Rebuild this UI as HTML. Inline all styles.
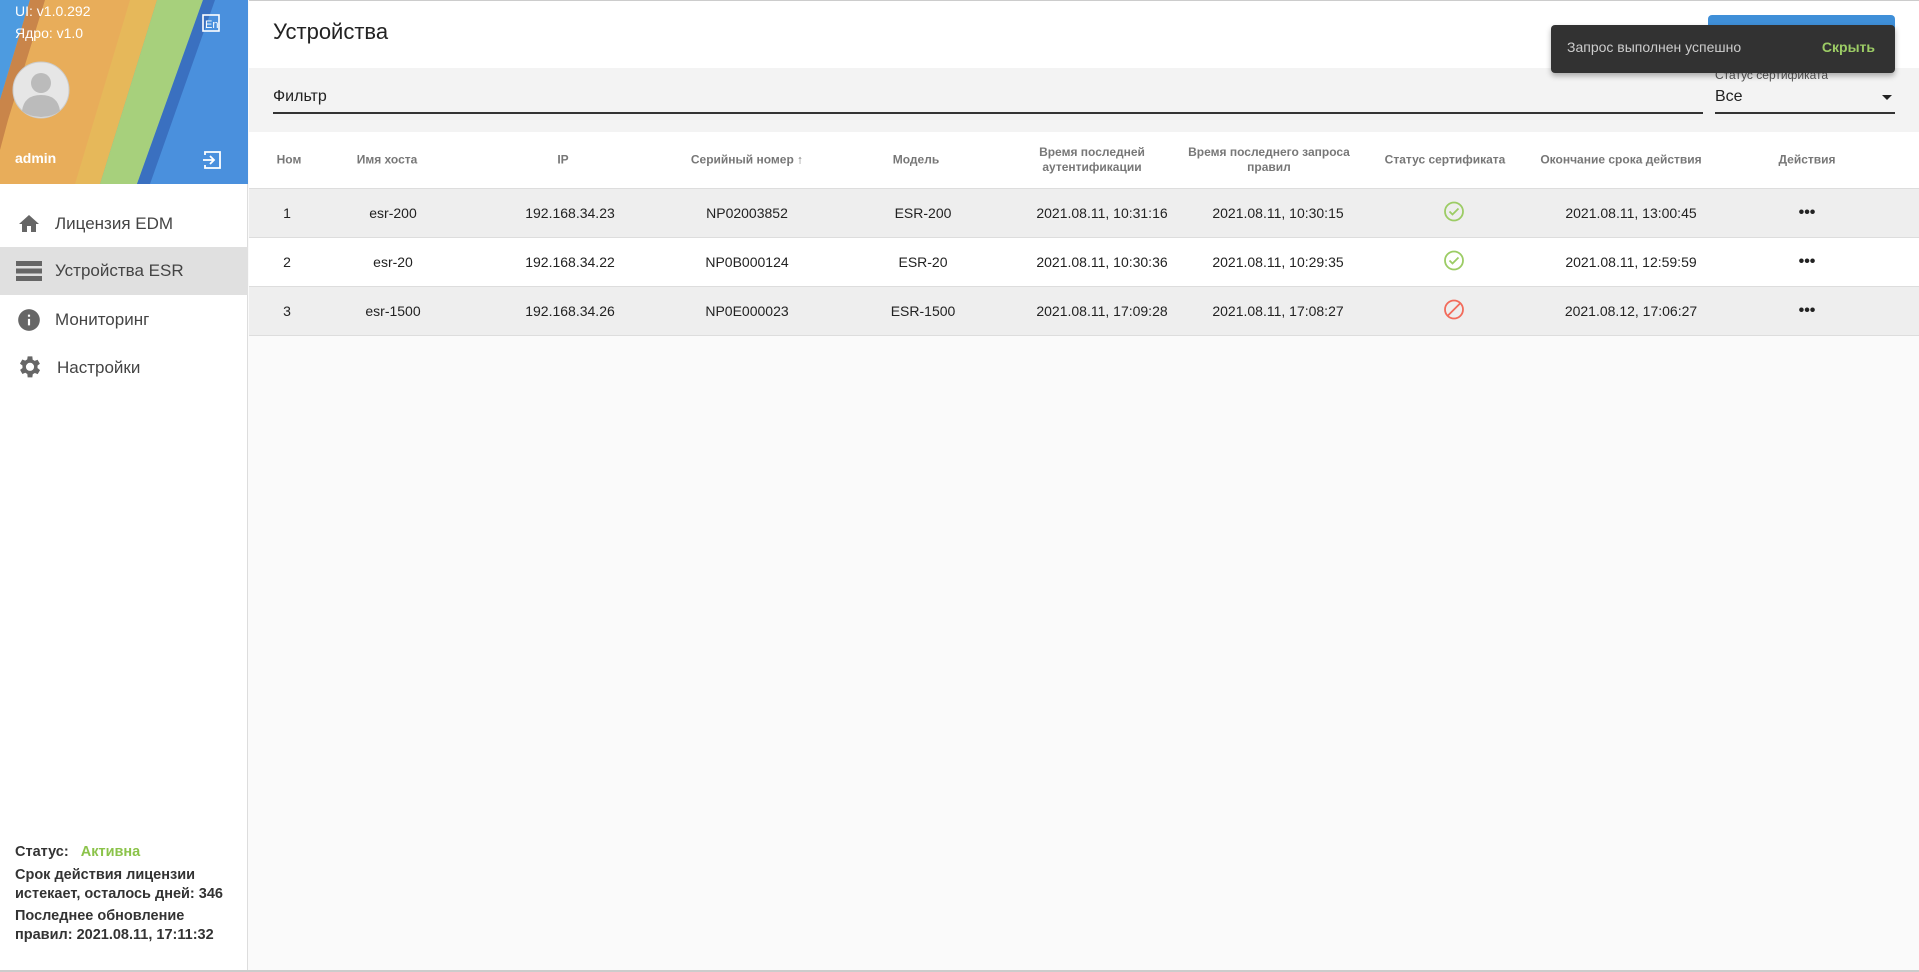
<!DOCTYPE html>
<html><head><meta charset="utf-8"><style>
*{box-sizing:border-box;margin:0;padding:0}
body{width:1919px;height:972px;overflow:hidden;background:#fafafa;font-family:"Liberation Sans","DejaVu Sans",sans-serif;position:relative;color:#222}
.sb{position:absolute;left:0;top:0;width:248px;height:972px;background:#fff;border-right:1px solid #ddd}
.hdr{position:absolute;left:0;top:0;width:248px;height:184px;overflow:hidden}
.ver{position:absolute;left:15px;color:#fff;font-size:14px}
.menu{position:absolute;left:0;width:248px;height:48px;display:flex;align-items:center;font-size:17px;color:#444}
.menu svg{margin-left:16px;margin-right:13px}
.foot{position:absolute;left:15px;font-size:14.5px;font-weight:bold;color:#333;line-height:19px}
.main{position:absolute;left:249px;top:0;right:0;height:972px;border-top:1px solid #ccc}
.title{position:absolute;left:24px;top:18px;font-size:22px;color:#222}
.filt{position:absolute;left:0;right:0;top:67px;height:64px;background:#f3f3f3}
.tbl{position:absolute;left:0;right:0;top:131px}
.row{position:relative;height:49px;border-bottom:1px solid #ddd;font-size:14px}
.row span{position:absolute;top:50%;transform:translate(-50%,-50%);white-space:nowrap;text-align:center}
.th span{font-size:12px;font-weight:bold;color:#777;line-height:15px}
.th{height:57px;background:#fff}
.g{background:#eee}.w{background:#fff}
</style></head><body>
<div class="sb">
 <div class="hdr">
  <svg width="248" height="184" style="position:absolute;left:0;top:0">
   <rect width="248" height="184" fill="#4a90dd"/>
   <polygon points="0,0 30,0 0,100" fill="#4d9be0"/>
   <polygon points="30,0 157,0 100,184 0,184 0,100" fill="#e8ad5a"/>
   <polygon points="30,0 45,0 8,120 0,150 0,100" fill="#c9854a"/>
   <polygon points="130,0 157,0 100,184 75,184" fill="#e6b85a"/>
   <polygon points="157,0 203,0 137,184 100,184" fill="#a7d07c"/>
   <polygon points="203,0 215,0 150,184 137,184" fill="#3a70c0"/>
  </svg>
  <div class="ver" style="top:3px">UI: v1.0.292</div>
  <div class="ver" style="top:25px">Ядро: v1.0</div>
  <svg width="20" height="20" style="position:absolute;left:202px;top:14px"><rect x="1" y="1" width="16" height="16" fill="none" stroke="#fff" stroke-width="1.6"/><text x="3" y="14" fill="#fff" font-size="11" font-family="Liberation Sans">En</text></svg>
  <svg width="58" height="58" style="position:absolute;left:12px;top:61px"><circle cx="29" cy="29" r="28" fill="#e6e6e6" stroke="#ccc"/><circle cx="29" cy="22" r="10" fill="#bbb"/><path d="M10 50 Q12 34 29 34 Q46 34 48 50 Q40 56 29 56 Q18 56 10 50Z" fill="#bbb"/></svg>
  <div class="ver" style="top:150px;font-weight:bold">admin</div>
  <svg width="20" height="20" style="position:absolute;left:202px;top:150px" fill="none" stroke="#fff" stroke-width="1.8"><path d="M3 5V2h15v16H3v-3"/><path d="M1 10h11M8 6l4 4-4 4"/></svg>
 </div>
 <div class="menu" style="top:200px"><svg width="26" height="24" viewBox="0 0 24 24" fill="#666"><path d="M10 20v-6h4v6h5v-8h3L12 3 2 12h3v8z"/></svg>Лицензия EDM</div>
 <div class="menu" style="top:247px;background:#e0e0e0"><svg width="26" height="22" viewBox="0 0 26 22" fill="#666"><rect y="1" width="26" height="5"/><rect y="8.5" width="26" height="5"/><rect y="16" width="26" height="5"/></svg>Устройства ESR</div>
 <div class="menu" style="top:296px"><svg width="26" height="26" viewBox="0 0 24 24" fill="#666"><path d="M12 2a10 10 0 100 20 10 10 0 000-20zm1 15h-2v-6h2zm0-8h-2V7h2z"/></svg>Мониторинг</div>
 <div class="menu" style="top:344px"><svg width="28" height="28" viewBox="1 1 24 24" fill="#666"><path d="M19.4 13a7.5 7.5 0 000-2l2.1-1.6-2-3.5-2.5 1a7 7 0 00-1.7-1L15 3h-4l-.4 2.7a7 7 0 00-1.7 1l-2.5-1-2 3.5L6.6 11a7.5 7.5 0 000 2l-2.1 1.6 2 3.5 2.5-1a7 7 0 001.7 1L11 21h4l.4-2.7a7 7 0 001.7-1l2.5 1 2-3.5zM13 15.5a3.5 3.5 0 110-7 3.5 3.5 0 010 7z"/></svg>Настройки</div>
 <div class="foot" style="top:843px">Статус: <span style="color:#8bc34a;margin-left:8px">Активна</span></div>
 <div class="foot" style="top:866px">Срок действия лицензии<br>истекает, осталось дней: 346</div>
 <div class="foot" style="top:907px">Последнее обновление<br>правил: 2021.08.11, 17:11:32</div>
</div>
<div class="main">
 <div style="position:absolute;left:0;right:0;top:0;height:67px;background:#fff"></div>
 <div class="title">Устройства</div>
 <div style="position:absolute;left:1459px;top:14px;width:187px;height:40px;background:#3f8fd8;border-radius:4px"></div>
 <div class="filt">
  <div style="position:absolute;left:24px;top:20px;font-size:16px">Фильтр</div>
  <div style="position:absolute;left:24px;top:44px;width:1430px;height:2px;background:#333"></div>
  <div style="position:absolute;left:1466px;top:0px;font-size:12px;color:#555">Статус сертификата</div>
  <div style="position:absolute;left:1466px;top:20px;font-size:16px">Все</div>
  <div style="position:absolute;left:1633px;top:27px;border:5px solid transparent;border-top-color:#222"></div>
  <div style="position:absolute;left:1466px;top:44px;width:180px;height:2px;background:#333"></div>
 </div>
 <div class="tbl">
  <div class="row th"><span style="left:40px">Ном</span><span style="left:138px">Имя хоста</span><span style="left:314px">IP</span><span style="left:498px">Серийный номер ↑</span><span style="left:667px">Модель</span><span style="left:843px">Время последней<br>аутентификации</span><span style="left:1020px">Время последнего запроса<br>правил</span><span style="left:1196px">Статус сертификата</span><span style="left:1372px">Окончание срока действия</span><span style="left:1558px">Действия</span></div>
  <div class="row g"><span style="left:38px">1</span><span style="left:144px">esr-200</span><span style="left:321px">192.168.34.23</span><span style="left:498px">NP02003852</span><span style="left:674px">ESR-200</span><span style="left:853px">2021.08.11, 10:31:16</span><span style="left:1029px">2021.08.11, 10:30:15</span><span style="left:1205px"><svg width="22" height="22"><circle cx="11" cy="11" r="9" fill="none" stroke="#9ccc65" stroke-width="1.8"/><path d="M6.5 11l3 3 6-6" fill="none" stroke="#9ccc65" stroke-width="1.8"/></svg></span><span style="left:1382px">2021.08.11, 13:00:45</span><span style="left:1558px;font-weight:bold;font-size:16px">•••</span></div>
  <div class="row w"><span style="left:38px">2</span><span style="left:144px">esr-20</span><span style="left:321px">192.168.34.22</span><span style="left:498px">NP0B000124</span><span style="left:674px">ESR-20</span><span style="left:853px">2021.08.11, 10:30:36</span><span style="left:1029px">2021.08.11, 10:29:35</span><span style="left:1205px"><svg width="22" height="22"><circle cx="11" cy="11" r="9" fill="none" stroke="#9ccc65" stroke-width="1.8"/><path d="M6.5 11l3 3 6-6" fill="none" stroke="#9ccc65" stroke-width="1.8"/></svg></span><span style="left:1382px">2021.08.11, 12:59:59</span><span style="left:1558px;font-weight:bold;font-size:16px">•••</span></div>
  <div class="row g"><span style="left:38px">3</span><span style="left:144px">esr-1500</span><span style="left:321px">192.168.34.26</span><span style="left:498px">NP0E000023</span><span style="left:674px">ESR-1500</span><span style="left:853px">2021.08.11, 17:09:28</span><span style="left:1029px">2021.08.11, 17:08:27</span><span style="left:1205px"><svg width="22" height="22"><circle cx="11" cy="11" r="9" fill="none" stroke="#f26b5b" stroke-width="1.8"/><path d="M5 17L17 5" stroke="#f26b5b" stroke-width="1.8"/></svg></span><span style="left:1382px">2021.08.12, 17:06:27</span><span style="left:1558px;font-weight:bold;font-size:16px">•••</span></div>
 </div>
</div>
<div style="position:absolute;left:0;top:970px;width:1919px;height:2px;background:#ccc"></div>
<div style="position:absolute;left:1551px;top:25px;width:344px;height:48px;background:#323232;border-radius:4px;box-shadow:0 3px 6px rgba(0,0,0,.3);color:#ccc;font-size:14px">
 <span style="position:absolute;left:16px;top:14px">Запрос выполнен успешно</span>
 <span style="position:absolute;right:20px;top:14px;color:#9ccc65;font-weight:bold">Скрыть</span>
</div>
</body></html>
